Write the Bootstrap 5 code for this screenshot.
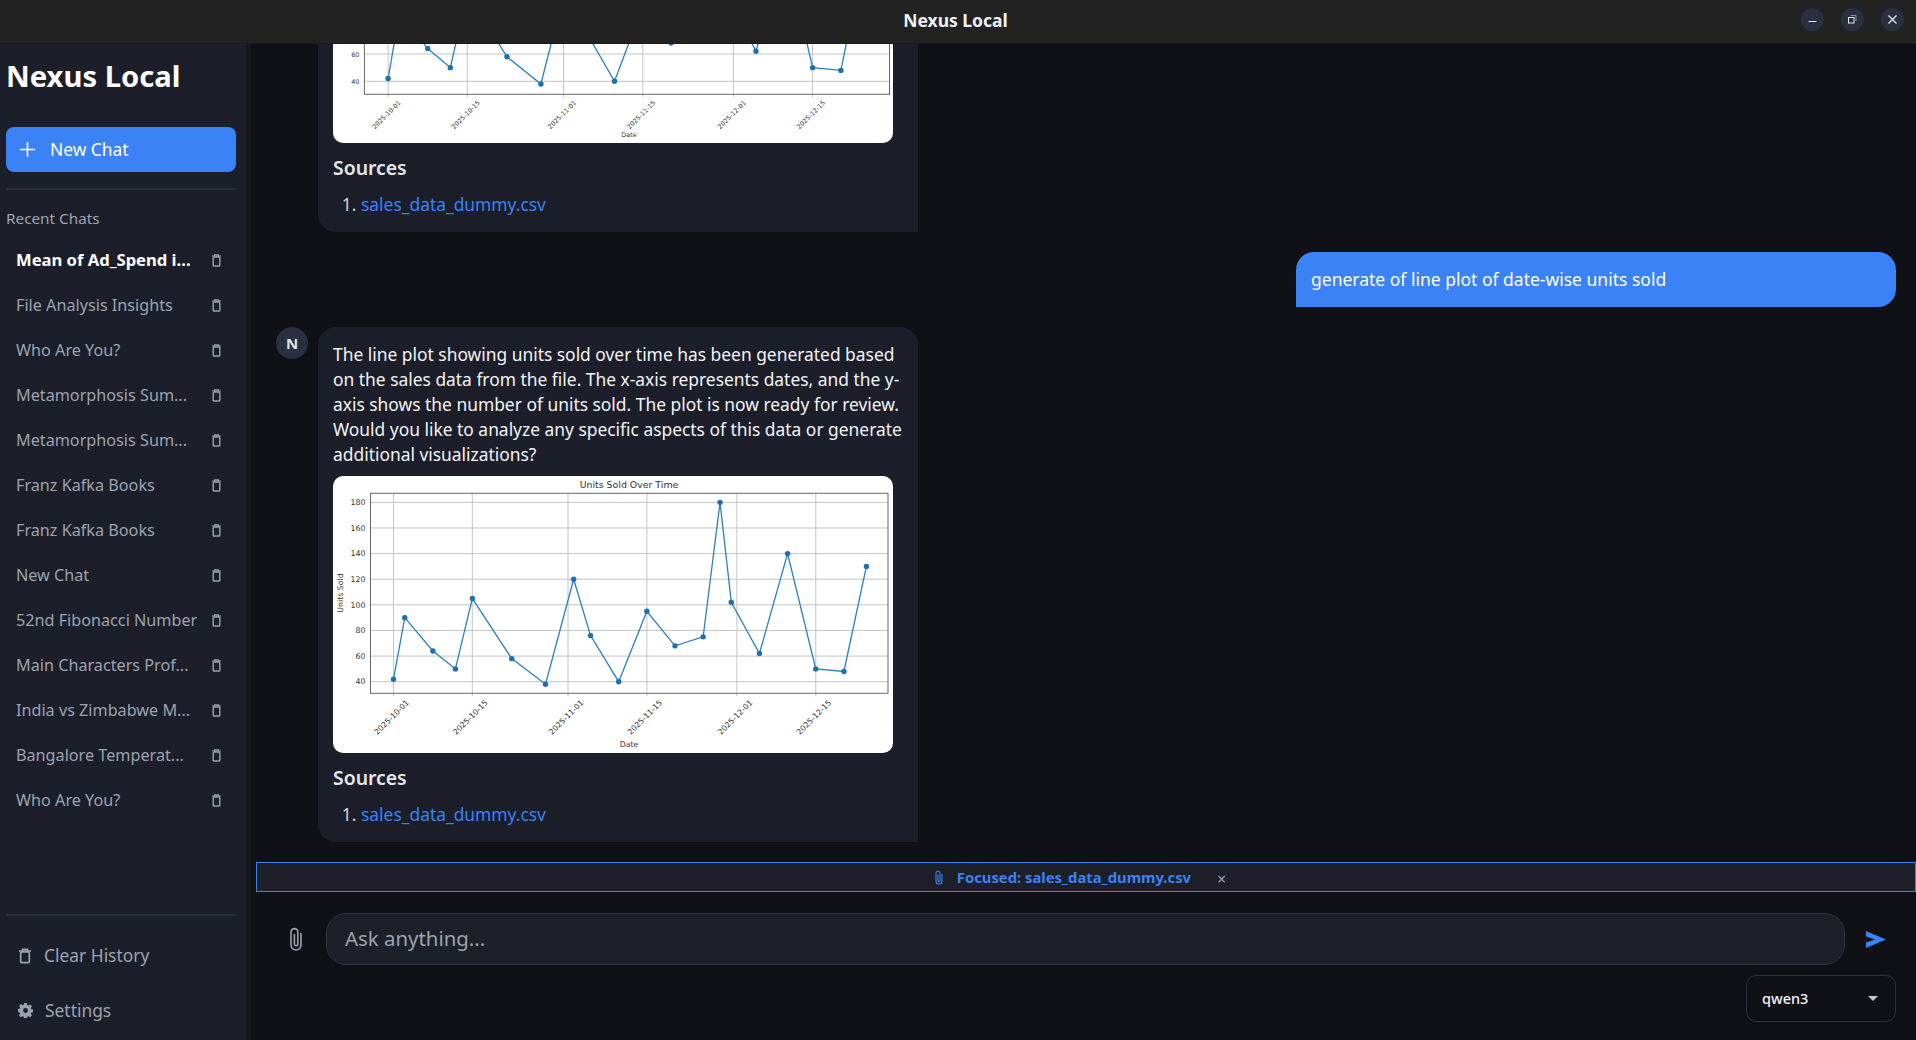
<!DOCTYPE html>
<html lang="en">
<head>
  <meta charset="UTF-8">
  <title>Nexus Local</title>
  <link href="https://cdn.jsdelivr.net/npm/bootstrap@5.3.0/dist/css/bootstrap.min.css" rel="stylesheet">
  <style>
    html,body{height:100%}
    body{background:#101116;color:#f3f4f6;font-family:"Noto Sans",sans-serif;overflow:hidden}
    .app-shell{height:1040px;display:flex;flex-direction:column}
    .title-strip{height:44px;flex:none;background:#222222;border-bottom:1px solid #1a1a1a;position:relative;padding:0 5px 2px 0}
    .title-strip .app-name{font-size:17.5px;font-weight:700;color:#eef1f5}
    .win-btn{width:23px;height:23px;border-radius:50%;background:#2a3040;border:0;padding:0;display:flex;align-items:center;justify-content:center}
    .win-group{position:absolute;right:12px;top:8px;gap:17px}

    .side-panel{width:246px;flex:none;background:#1c1f2a;padding:0 10px 2px 6px;display:flex;flex-direction:column}
    .side-gap{width:5px;flex:none;background:#15171e}
    .side-brand{font-size:29.2px;font-weight:700;color:#fff;margin:11px 0 0;line-height:42px;height:42px}
    .new-chat-btn{height:45px;margin-top:30px;border-radius:8px;background:#3b82f6;border:0;font-size:17.4px;padding:0 0 0 14px;gap:15px}
    .side-rule{height:2px;background:#2a2d3a;flex:none}
    .recent-label{font-size:15.3px;color:#9ca3af;margin:18px 0 0;line-height:20px}
    .chat-stack{margin-top:10px}
    .chat-link{height:45px;padding:0 0 0 10px;color:#9ca3af;font-size:16.2px;background:none;border:0;text-decoration:none}
    .chat-link.active-chat{color:#fff;font-weight:700;font-size:16.6px}
    .chat-link .chat-name{width:196px;white-space:nowrap;overflow:hidden}
    .foot-link{color:#9ca3af;font-size:17.4px;padding-left:12px;gap:12px;text-decoration:none;height:55px}
    .foot-first{margin-top:12px}

    .chat-pane{flex:1;min-width:0;display:flex;flex-direction:column}
    .msg-scroll{flex:1;min-height:0;overflow:hidden;display:flex;flex-direction:column;justify-content:flex-end;padding:0 20px 20px 16px}
    .bot-row{display:flex;gap:10px;margin-left:9px}
    .bot-avatar{width:32px;height:32px;border-radius:50%;background:#2a3040;color:#dfe3ea;font-weight:700;font-size:15px;display:flex;align-items:center;justify-content:center;flex:none}
    .avatar-space{width:32px;flex:none}
    .bot-bubble{width:600px;flex:none;background:#1c1f2a;border-radius:18px 18px 0 18px;padding:15px 10px 15px 15px}
    .bot-bubble p{font-size:17.4px;line-height:25px;margin:0 0 9px;color:#f3f4f6}
    .plot-frame{width:560px;height:277px;background:#fff;border-radius:10px;overflow:hidden;display:block}
    .plot-frame svg{display:block}
    .src-title{font-size:19.4px;font-weight:600;color:#e5e7eb;margin:11px 0 0;line-height:28px}
    .src-list{margin:10px 0 0;padding-left:28px;font-size:17.4px;line-height:25px;color:#d1d5db}
    .src-list a{color:#3b82f6;text-decoration:none}
    .user-row{display:flex;justify-content:flex-end;margin:20px 0}
    .user-bubble{width:600px;height:55px;background:#3b82f6;color:#fff;border-radius:18px 18px 18px 0;padding:0 15px;font-size:17.5px;display:flex;align-items:center}

    .focus-strip{height:30px;flex:none;background:#1e2029;border:1px solid #3b82f6;margin-left:5px;padding-right:12px;color:#3b82f6;font-size:14.8px;font-weight:700}
    .focus-clip{margin-right:13px}
    .focus-close{color:#9ca3af;font-size:16px;font-weight:400;margin-left:26px;line-height:1;padding-top:3px}
    .input-wrap{padding:21px 20px 18px 37px}
    .ask-box{height:52px;border-radius:20px;background:#1e2029;border:1px solid #2e3240;color:#e5e7eb;font-size:20.4px;padding:0 18px 2px}
    .ask-box::placeholder{color:#9ca3af}
    .ask-box:focus{background:#1e2029;color:#e5e7eb;border-color:#2e3240;box-shadow:none}
    .model-pick{width:150px;height:47px;border-radius:10px;background-color:#101116;border:1px solid #2e3240;color:#f3f4f6;font-size:14.5px;font-weight:500;padding:0 15px;--bs-form-select-bg-img:none;background-image:none}
    .model-wrap{position:relative;width:150px;margin-top:10px}
    .model-caret{position:absolute;right:18px;top:21px;width:0;height:0;border-left:5px solid transparent;border-right:5px solid transparent;border-top:5px solid #c4c7cc;pointer-events:none}
    .plain-btn{background:none;border:0;padding:0;line-height:0}
    .clip-btn{width:38px;flex:none;text-align:left}
    .send-btn{flex:none;margin:0 10px 0 21px}
  </style>
</head>
<body>
<div class="app-shell">
  <div class="title-strip d-flex align-items-center justify-content-center">
    <span class="app-name">Nexus Local</span>
    <div class="win-group d-flex">
      <button class="win-btn"><svg width="11" height="11" viewBox="0 0 11 11"><path d="M1.5 7.5h8" stroke="#e5e7eb" stroke-width="1"/></svg></button>
      <button class="win-btn"><svg width="11" height="11" viewBox="0 0 11 11"><rect x="1.5" y="3.5" width="5.5" height="5.5" fill="none" stroke="#e5e7eb" stroke-width="1"/><path d="M3.5 1.5h5.5v5.5" fill="none" stroke="#8b8f98" stroke-width="1"/></svg></button>
      <button class="win-btn"><svg width="11" height="11" viewBox="0 0 11 11"><path d="M1.5 1.5l8 8M9.5 1.5l-8 8" stroke="#e5e7eb" stroke-width="1.3"/></svg></button>
    </div>
  </div>

  <div class="d-flex flex-grow-1" style="min-height:0">
    <aside class="side-panel">
      <h1 class="side-brand">Nexus Local</h1>
      <button class="btn btn-primary new-chat-btn d-flex align-items-center text-white">
        <svg width="15" height="15" viewBox="0 0 15 15"><path d="M7.5 0v15M0 7.5h15" stroke="#fff" stroke-width="1.6"/></svg>
        New Chat
      </button>
      <div class="side-rule mt-3"></div>
      <div class="recent-label">Recent Chats</div>
      <div class="d-flex flex-column chat-stack" id="chatList"></div>
      <div class="side-rule mt-auto"></div>
      <a class="foot-link foot-first d-flex align-items-center" href="#">
        <svg width="14" height="16" viewBox="0 0 14 16"><path d="M1 3h12M4.5 3V1.2h5V3" fill="none" stroke="#9ca3af" stroke-width="1.5"/><rect x="2.7" y="3.8" width="8.6" height="10.8" rx="1" fill="none" stroke="#9ca3af" stroke-width="1.7"/></svg>
        Clear History
      </a>
      <a class="foot-link d-flex align-items-center" href="#">
        <svg width="15" height="15" viewBox="0 0 16 16"><path fill="#9ca3af" fill-rule="evenodd" d="M6.6 0h2.8l.4 2.1 1.3.6 1.8-1.2 2 2-1.2 1.8.6 1.3 2.1.4v2.8l-2.1.4-.6 1.3 1.2 1.8-2 2-1.8-1.2-1.3.6-.4 2.1H6.6l-.4-2.1-1.3-.6-1.8 1.2-2-2 1.2-1.8-.6-1.3L-.4 9.4V6.6l2.1-.4.6-1.3-1.2-1.8 2-2 1.8 1.2 1.3-.6zM8 5.4a2.6 2.6 0 1 0 0 5.2 2.6 2.6 0 0 0 0-5.2z"/></svg>
        Settings
      </a>
    </aside>
    <div class="side-gap"></div>

    <main class="chat-pane">
      <div class="msg-scroll">
        <div class="bot-row">
          <div class="avatar-space"></div>
          <div class="bot-bubble">
            <div class="plot-frame" data-chart="a"></div>
            <div class="src-title">Sources</div>
            <ol class="src-list"><li><a href="#">sales_data_dummy.csv</a></li></ol>
          </div>
        </div>
        <div class="user-row"><div class="user-bubble">generate of line plot of date-wise units sold</div></div>
        <div class="bot-row">
          <div class="bot-avatar">N</div>
          <div class="bot-bubble">
            <p>The line plot showing units sold over time has been generated based on the sales data from the file. The x-axis represents dates, and the y-axis shows the number of units sold. The plot is now ready for review. Would you like to analyze any specific aspects of this data or generate additional visualizations?</p>
            <div class="plot-frame" data-chart="b"></div>
            <div class="src-title">Sources</div>
            <ol class="src-list"><li><a href="#">sales_data_dummy.csv</a></li></ol>
          </div>
        </div>
      </div>

      <div class="focus-strip d-flex align-items-center justify-content-center">
        <svg class="focus-clip" width="10" height="15" viewBox="0 0 10 15"><path d="M8 4v7a3 3 0 0 1-6 0V3.2a2 2 0 0 1 4 0v7.3a.9.9 0 0 1-2 0V4.5" fill="none" stroke="#3b82f6" stroke-width="1.1"/></svg>
        <span>Focused: sales_data_dummy.csv</span>
        <span class="focus-close">×</span>
      </div>

      <div class="input-wrap">
        <div class="d-flex align-items-center">
          <button class="plain-btn clip-btn"><svg width="16" height="24" viewBox="0 0 16 24"><path d="M13 6v12a5 5 0 0 1-10 0V5a3.4 3.4 0 0 1 6.8 0v12a1.7 1.7 0 0 1-3.4 0V7" fill="none" stroke="#9ca3af" stroke-width="1.6"/></svg></button>
          <input class="form-control ask-box" placeholder="Ask anything...">
          <button class="plain-btn send-btn"><svg width="20" height="17" viewBox="0 0 20 17"><path fill="#3b82f6" d="M0 0l20 8.5L0 17v-5.6l9-2.9-9-2.9z"/></svg></button>
        </div>
        <div class="d-flex justify-content-end">
          <div class="model-wrap">
            <select class="form-select model-pick"><option>qwen3</option></select>
            <span class="model-caret"></span>
          </div>
        </div>
      </div>
    </main>
  </div>
</div>

<script>
  /* ---------- sidebar ---------- */
  const CHATS = ["Mean of Ad_Spend i...","File Analysis Insights","Who Are You?","Metamorphosis Sum...","Metamorphosis Sum...","Franz Kafka Books","Franz Kafka Books","New Chat","52nd Fibonacci Number","Main Characters Prof...","India vs Zimbabwe M...","Bangalore Temperat...","Who Are You?"];
  const TRASH = `<svg width="9" height="13" viewBox="0 0 9 13"><path d="M0 2h9M2.5 2V.7h4V2" fill="none" stroke="#9ca3af" stroke-width="1.1"/><rect x="1.2" y="3" width="6.6" height="9" rx=".8" fill="none" stroke="#9ca3af" stroke-width="1.4"/></svg>`;
  document.getElementById("chatList").innerHTML = CHATS.map((c,i)=>
    `<a href="#" class="chat-link d-flex align-items-center ${i==0?"active-chat":""}"><span class="chat-name">${c}</span>${TRASH}</a>`).join("");

  /* ---------- charts ---------- */
  const DATA = [[0,42],[2,90],[7,64],[11,50],[14,105],[21,58],[27,38],[32,120],[35,76],[40,40],[45,95],[50,68],[55,75],[58,180],[60,102],[65,62],[70,140],[75,50],[80,48],[84,130]];
  const TICKS = [[0,"2025-10-01"],[14,"2025-10-15"],[31,"2025-11-01"],[45,"2025-11-15"],[61,"2025-12-01"],[75,"2025-12-15"]];
  const CFG = {
    a:{x0:55.1,kx:5.66,y40:215.3,ky:1.365,left:31.4,right:556.5,top:15,bottom:228.3,tickOff:22,fs:6.4},
    b:{x0:60.5,kx:5.63,y40:205.7,ky:1.281,left:37.5,right:555,top:17.3,bottom:217.3,tickOff:26,fs:7.8}
  };
  function drawChart(c){
    const X = d=>c.x0+d*c.kx, Y = v=>c.y40-(v-40)*c.ky;
    let s = `<svg width="560" height="277" viewBox="0 0 560 277" font-family="DejaVu Sans, sans-serif" fill="#333">`;
    s += `<text x="296" y="12" text-anchor="middle" font-size="9.4">Units Sold Over Time</text>`;
    for(let v=40;v<=180;v+=20){
      s += `<path d="M${c.left} ${Y(v)}H${c.right}" stroke="#c4c4c4" stroke-width="1"/>`;
      s += `<text x="${c.left-5}" y="${Y(v)+2.7}" text-anchor="end" font-size="${c.fs}">${v}</text>`;
    }
    TICKS.forEach(t=>{
      const x = X(t[0]);
      s += `<path d="M${x} ${c.top}V${c.bottom+3}" stroke="#c4c4c4" stroke-width="1"/>`;
      s += `<text transform="translate(${x} ${c.bottom+c.tickOff}) rotate(-45)" text-anchor="middle" font-size="${c.fs}">${t[1]}</text>`;
    });
    s += `<rect x="${c.left}" y="${c.top}" width="${c.right-c.left}" height="${c.bottom-c.top}" fill="none" stroke="#666" stroke-width="1"/>`;
    s += `<polyline fill="none" stroke="#2a80bd" stroke-width="1.3" points="${DATA.map(p=>X(p[0])+","+Y(p[1])).join(" ")}"/>`;
    DATA.forEach(p=>{ s += `<circle cx="${X(p[0])}" cy="${Y(p[1])}" r="2.7" fill="#1f6fb0"/>`; });
    s += `<text x="296" y="271" text-anchor="middle" font-size="${c.fs}">Date</text>`;
    s += `<text transform="translate(10 117) rotate(-90)" text-anchor="middle" font-size="${c.fs}">Units Sold</text>`;
    return s+`</svg>`;
  }
  document.querySelectorAll("[data-chart]").forEach(el=>{ el.innerHTML = drawChart(CFG[el.dataset.chart]); });
</script>
<script src="https://cdn.jsdelivr.net/npm/bootstrap@5.3.0/dist/js/bootstrap.bundle.min.js"></script>
</body>
</html>
